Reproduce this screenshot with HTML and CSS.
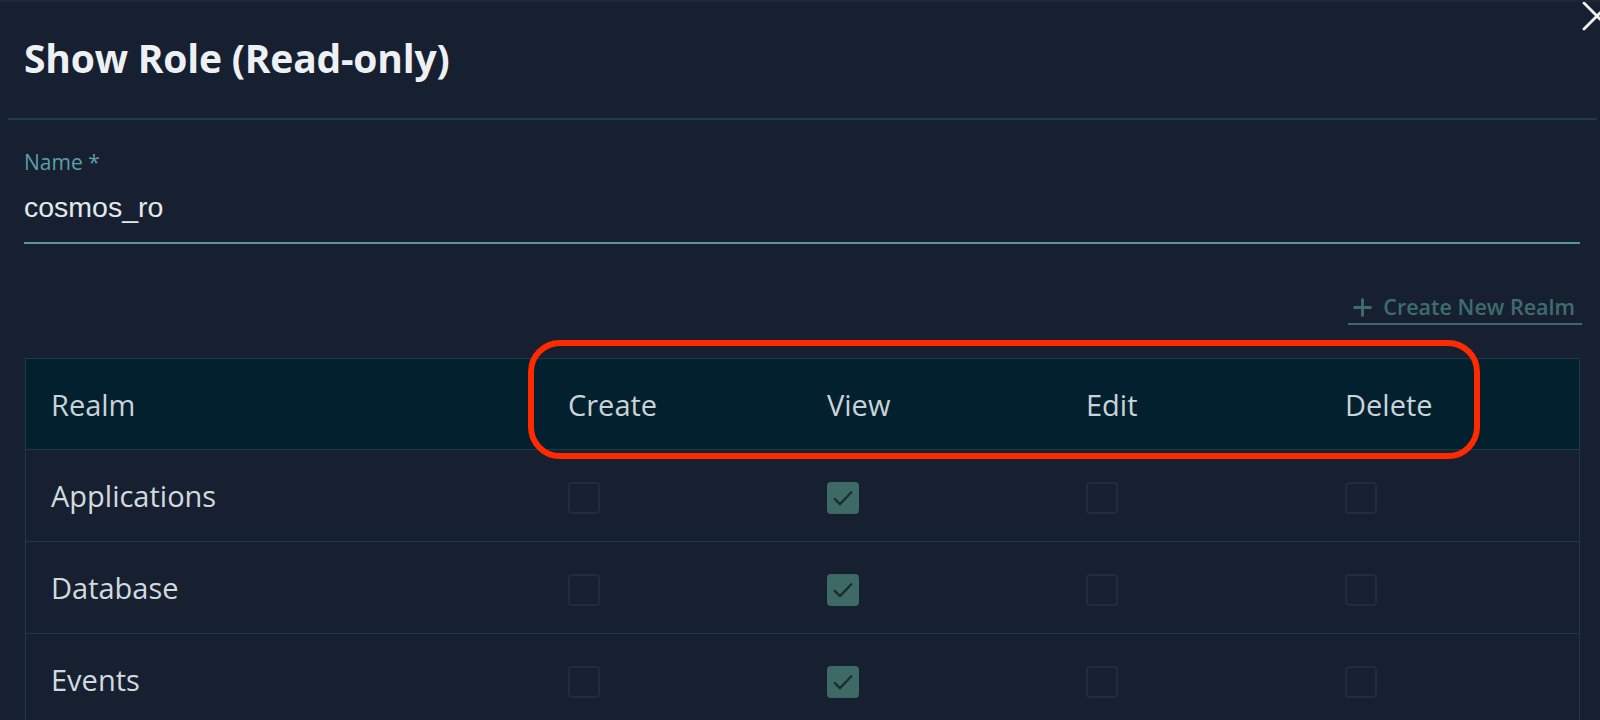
FILE: index.html
```html
<!DOCTYPE html>
<html lang="en">
<head>
<meta charset="utf-8">
<title>Show Role (Read-only)</title>
<link rel="stylesheet" href="styles.css">
</head>
<body>
<div class="dialog">
  <button class="close" aria-label="Close">
    <svg width="30" height="30" viewBox="0 0 30 30"><path d="M2 2 L28 28 M28 2 L2 28" stroke="#f2f4f6" stroke-width="2.8" stroke-linecap="round" fill="none"/></svg>
  </button>
  <header class="dlg-header">
    <h1 class="title">Show Role (Read-only)</h1>
  </header>
  <div class="dlg-body">
    <div class="field">
      <label class="field-label">Name *</label>
      <div class="field-input">cosmos_ro</div>
    </div>
    <div class="actions">
      <a class="create-link">
        <svg class="plus" width="19" height="19" viewBox="0 0 19 19"><path d="M9.5 0.5 V18.5 M0.5 9.5 H18.5" stroke="currentColor" stroke-width="2.8" fill="none"/></svg>
        <span>Create New Realm</span>
      </a>
    </div>
    <div class="table-wrap">
      <div class="perm-table">
        <div class="row head">
          <div class="cell">Realm</div>
          <div class="cell">Create</div>
          <div class="cell">View</div>
          <div class="cell">Edit</div>
          <div class="cell">Delete</div>
        </div>
        <div class="row">
          <div class="cell">Applications</div>
          <div class="cell"><span class="cb"></span></div>
          <div class="cell"><span class="cb on"><svg viewBox="0 0 32 32"><path d="M6.5 17 L12.5 23 L25.5 9.5" stroke="#1c2b30" stroke-width="2.6" fill="none" stroke-linecap="round" stroke-linejoin="round"/></svg></span></div>
          <div class="cell"><span class="cb"></span></div>
          <div class="cell"><span class="cb"></span></div>
        </div>
        <div class="row">
          <div class="cell">Database</div>
          <div class="cell"><span class="cb"></span></div>
          <div class="cell"><span class="cb on"><svg viewBox="0 0 32 32"><path d="M6.5 17 L12.5 23 L25.5 9.5" stroke="#1c2b30" stroke-width="2.6" fill="none" stroke-linecap="round" stroke-linejoin="round"/></svg></span></div>
          <div class="cell"><span class="cb"></span></div>
          <div class="cell"><span class="cb"></span></div>
        </div>
        <div class="row">
          <div class="cell">Events</div>
          <div class="cell"><span class="cb"></span></div>
          <div class="cell"><span class="cb on"><svg viewBox="0 0 32 32"><path d="M6.5 17 L12.5 23 L25.5 9.5" stroke="#1c2b30" stroke-width="2.6" fill="none" stroke-linecap="round" stroke-linejoin="round"/></svg></span></div>
          <div class="cell"><span class="cb"></span></div>
          <div class="cell"><span class="cb"></span></div>
        </div>
      </div>
      <div class="highlight"></div>
    </div>
  </div>
</div>
</body>
</html>
```
FILE: styles.css
```css
html, body {
  margin: 0;
  padding: 0;
  height: 100%;
  overflow: hidden;
  background: #172031;
}
body {
  font-family: "Open Sans", "Noto Sans", sans-serif;
  color: #d2dadf;
}
.dialog {
  position: relative;
  height: 720px;
  border-top: 2px solid #1d2736;
  box-sizing: border-box;
  overflow: hidden;
}
.close {
  position: absolute;
  top: -1px;
  right: -12px;
  width: 30px;
  height: 30px;
  padding: 0;
  border: 0;
  background: none;
}
.close svg { display: block; }
.dlg-header {
  margin: 0 3px 0 8px;
  padding: 30px 0 34px 16px;
  border-bottom: 2px solid #1f3c47;
}
.title {
  margin: 0;
  font-size: 39px;
  line-height: 52px;
  font-weight: 700;
  color: #eef1f4;
  letter-spacing: -0.2px;
}
.dlg-body {
  padding: 0 20px 0 24px;
}
.field {
  padding-top: 30px;
}
.field-label {
  display: block;
  font-size: 21px;
  line-height: 24px;
  color: #5b9fa9;
}
.field-input {
  margin-top: 16px;
  font-family: "Liberation Sans", Arial, sans-serif;
  font-size: 28.5px;
  line-height: 34px;
  color: #e4e8ec;
  padding-bottom: 18px;
  border-bottom: 2px solid #5795a0;
}
.actions {
  display: flex;
  justify-content: flex-end;
  padding-top: 51px;
}
.create-link {
  display: flex;
  align-items: center;
  gap: 11px;
  padding: 0 7px 4px 5px;
  margin-right: -2px;
  font-size: 21.5px;
  line-height: 24px;
  font-weight: 600;
  color: #3e6d6d;
  border-bottom: 2px solid #3a6769;
}
.plus { display: block; }
.table-wrap {
  position: relative;
  margin-top: 33px;
}
.perm-table {
  border: 1px solid #1d3a45;
  margin-left: 1px;
}
.row {
  display: grid;
  grid-template-columns: 517px repeat(4, 1fr);
  height: 91px;
  border-bottom: 1px solid #1d3a45;
}
.row:last-child { border-bottom: 0; }
.row.head {
  background: #03202f;
  height: 90px;
}
.cell {
  display: flex;
  align-items: center;
  padding-left: 25px;
  font-size: 29px;
  color: #d2dadf;
}
.head .cell { color: #c9d3d8; }
.cb {
  display: block;
  width: 32px;
  height: 32px;
  box-sizing: border-box;
  border: 2px solid #222d3c;
  border-radius: 4px;
  margin-top: 5px;
}
.cb.on {
  background: #3d6a64;
  border-color: #3d6a64;
}
.cb svg {
  display: block;
  width: 28px;
  height: 28px;
}
.highlight {
  position: absolute;
  left: 504px;
  top: -18px;
  width: 952px;
  height: 119px;
  box-sizing: border-box;
  border: 6px solid #ff2a00;
  border-radius: 32px;
  pointer-events: none;
}
```
